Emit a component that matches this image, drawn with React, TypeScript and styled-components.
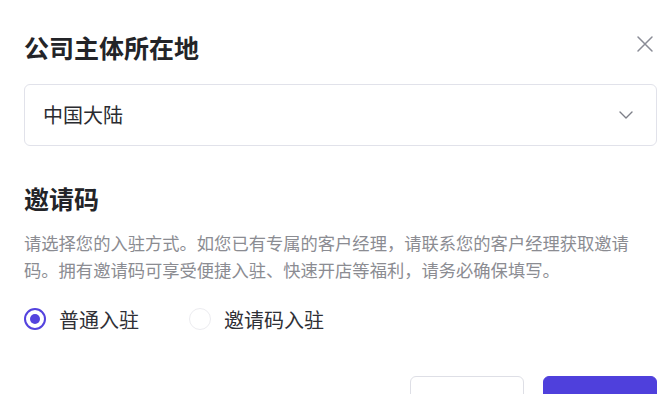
import React, { useState } from 'react';
import styled, { createGlobalStyle } from 'styled-components';

const GlobalStyle = createGlobalStyle`
  html, body {
    margin: 0;
    padding: 0;
    background: #ffffff;
  }
  body {
    font-family: "Noto Sans CJK SC", "Noto Sans", sans-serif;
  }
`;

type Mode = 'normal' | 'invite';

function CloseIcon() {
  return (
    <svg width="18" height="18" viewBox="0 0 18 18" fill="none">
      <path d="M2 2L16 16M16 2L2 16" stroke="#8a8c96" strokeWidth="1.5" strokeLinecap="round" />
    </svg>
  );
}

function ChevronIcon() {
  return (
    <svg width="14" height="8" viewBox="0 0 14 8" fill="none">
      <path d="M1 1L7 7L13 1" stroke="#7d7f88" strokeWidth="1.4" strokeLinecap="round" strokeLinejoin="round" />
    </svg>
  );
}

function App() {
  const [mode, setMode] = useState<Mode>('normal');

  return (
    <StyledModal>
      <GlobalStyle />
      <Header>
        <Title>公司主体所在地</Title>
        <CloseButton type="button" aria-label="关闭">
          <CloseIcon />
        </CloseButton>
      </Header>

      <Select>
        <span>中国大陆</span>
        <ChevronIcon />
      </Select>

      <SectionTitle>邀请码</SectionTitle>
      <Description>
        请选择您的入驻方式。如您已有专属的客户经理，请联系您的客户经理获取邀请码。拥有邀请码可享受便捷入驻、快速开店等福利，请务必确保填写。
      </Description>

      <RadioGroup>
        <RadioOption onClick={() => setMode('normal')}>
          <RadioCircle checked={mode === 'normal'} />
          普通入驻
        </RadioOption>
        <RadioOption onClick={() => setMode('invite')}>
          <RadioCircle checked={mode === 'invite'} />
          邀请码入驻
        </RadioOption>
      </RadioGroup>

      <Footer>
        <Button type="button">取消</Button>
        <Button type="button" primary>
          下一步
        </Button>
      </Footer>
    </StyledModal>
  );
}

export default App;

const StyledModal = styled.div`
  box-sizing: border-box;
  width: 663px;
  height: 394px;
  overflow: hidden;
  padding: 30px 6px 0 24px;
  background: #ffffff;
`;

const Header = styled.div`
  display: flex;
  align-items: center;
  justify-content: space-between;
  height: 35px;
`;

const Title = styled.h2`
  margin: 0;
  font-size: 25px;
  line-height: 35px;
  font-weight: 600;
  color: #232428;
`;

const CloseButton = styled.button`
  display: flex;
  align-items: center;
  justify-content: center;
  margin: -8px 3px 0 0;
  padding: 0;
  border: none;
  background: none;
  cursor: pointer;
`;

const Select = styled.div`
  box-sizing: border-box;
  display: flex;
  align-items: center;
  justify-content: space-between;
  height: 62px;
  margin-top: 19px;
  padding: 0 23px 0 18px;
  border: 1px solid #e1e2ea;
  border-radius: 6px;
  font-size: 20px;
  color: #2a2b30;

  span {
    margin-top: -2px;
  }
`;

const SectionTitle = styled.h3`
  margin: 35px 0 0;
  font-size: 25px;
  line-height: 35px;
  font-weight: 600;
  color: #232428;
`;

const Description = styled.p`
  max-width: 614px;
  margin: 13px 0 0;
  font-size: 17.3px;
  line-height: 27px;
  color: #8b8c92;
`;

const RadioGroup = styled.div`
  display: flex;
  align-items: center;
  gap: 50px;
  margin-top: 22px;
  height: 28px;
`;

const RadioOption = styled.label`
  display: flex;
  align-items: center;
  gap: 13px;
  font-size: 20px;
  color: #2f3036;
  cursor: pointer;
`;

const RadioCircle = styled.span<{ checked: boolean }>`
  box-sizing: border-box;
  position: relative;
  width: 22px;
  height: 22px;
  border-radius: 50%;
  border: ${({ checked }) => (checked ? '2px solid #5443de' : '1px solid #ececf0')};

  &::after {
    content: '';
    display: ${({ checked }) => (checked ? 'block' : 'none')};
    position: absolute;
    top: 50%;
    left: 50%;
    width: 10px;
    height: 10px;
    margin: -5px 0 0 -5px;
    border-radius: 50%;
    background: #5443de;
  }
`;

const Footer = styled.div`
  display: flex;
  justify-content: flex-end;
  gap: 19px;
  margin-top: 43px;
`;

const Button = styled.button<{ primary?: boolean }>`
  box-sizing: border-box;
  width: 114px;
  height: 58px;
  border-radius: 6px;
  font-family: inherit;
  font-size: 18px;
  border: 1px solid ${({ primary }) => (primary ? '#4f40dc' : '#dedfe6')};
  background: ${({ primary }) => (primary ? '#4f40dc' : '#ffffff')};
  color: ${({ primary }) => (primary ? '#ffffff' : '#2f3036')};
  cursor: pointer;
`;
